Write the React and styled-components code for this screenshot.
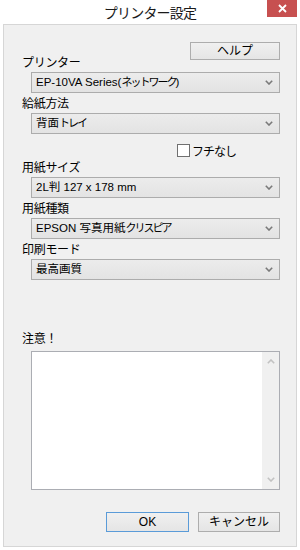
import React from "react";
import styled, { createGlobalStyle } from "styled-components";

const Global = createGlobalStyle`
  html, body { margin: 0; padding: 0; background: #ffffff; }
  body {
    font-family: "Noto Sans CJK JP", "Noto Sans", sans-serif;
    font-size: 12px;
    color: #000;
  }
  * { box-sizing: border-box; }
`;

const Window = styled.div`
  width: 300px;
  height: 550px;
  background: #ffffff;
  display: flex;
  flex-direction: column;
`;

const TitleBar = styled.div`
  height: 24px;
  display: grid;
  grid-template-columns: 1fr auto 1fr;
  align-items: start;
`;

const Title = styled.div`
  grid-column: 2;
  font-size: 14px;
  line-height: 24px;
  letter-spacing: -0.8px;
  color: #1a1a1a;
`;

const CloseButton = styled.div`
  grid-column: 3;
  justify-self: end;
  margin-right: 3px;
  width: 30px;
  height: 17px;
  background: #c75050;
  display: flex;
  align-items: center;
  justify-content: center;
`;

const Panel = styled.div`
  margin: 0 3px;
  height: 523px;
  border: 1px solid #d6d6d6;
  background: #f0f0f0;
  padding: 17px 16px 14px 18px;
  display: flex;
  flex-direction: column;
`;

const HelpRow = styled.div`
  display: flex;
  justify-content: flex-end;
  margin-bottom: -8px;
`;

const Button = styled.div`
  width: ${(p) => p.$w || 82}px;
  height: ${(p) => p.$h || 20}px;
  border: 1px solid ${(p) => (p.$primary ? "#5a9bd8" : "#adadad")};
  background: linear-gradient(#f0f0f0, #e5e5e5);
  display: flex;
  align-items: center;
  justify-content: center;
  font-family: "Liberation Sans", "Noto Sans CJK JP", sans-serif;
  font-size: 12px;
  line-height: 1;
  color: #000;
`;

const FieldLabel = styled.div`
  height: 20px;
  line-height: 20px;
  font-size: 12px;
  letter-spacing: -0.3px;
`;

const ComboBox = styled.div`
  margin-left: 9px;
  height: 21px;
  border: 1px solid #acacac;
  background: linear-gradient(#ececec, #e3e3e3);
  display: flex;
  align-items: center;
  padding: 0 6px 0 4px;
`;

const ComboText = styled.div`
  flex: 1;
  font-family: "Liberation Sans", "Noto Sans CJK JP", sans-serif;
  font-size: 11.5px;
  line-height: 1;
  white-space: nowrap;
`;

const Kana = styled.span`
  font-size: ${(p) => p.$size || 11}px;
  letter-spacing: ${(p) => p.$track || -2}px;
`;

const CheckRow = styled.div`
  height: 23px;
  display: flex;
  align-items: flex-end;
  padding-left: 155px;
  gap: 2px;
`;

const CheckBox = styled.div`
  width: 13px;
  height: 13px;
  border: 1px solid #707070;
  background: #ffffff;
`;

const CheckLabel = styled.div`
  font-size: 12px;
  line-height: 13px;
`;

const NotesSection = styled.div`
  margin-top: auto;
  display: flex;
  flex-direction: column;
`;

const NotesLabel = styled(FieldLabel)`
  margin-bottom: 3px;
`;

const NotesBox = styled.div`
  margin-left: 9px;
  height: 139px;
  border: 1px solid #abadb3;
  background: #ffffff;
  display: flex;
  justify-content: flex-end;
`;

const ScrollBar = styled.div`
  width: 17px;
  background: #f0f0f0;
  display: flex;
  flex-direction: column;
  justify-content: space-between;
  align-items: center;
  padding: 7px 0 7px;
`;

const Footer = styled.div`
  margin-top: 22px;
  display: flex;
  justify-content: flex-end;
  gap: 9px;
`;

const KANA = /([\u3040-\u30FF]+)/;

const narrowKana = (text, size, track) =>
  text.split(KANA).map((part, i) =>
    i % 2 === 1 ? (
      <Kana key={i} $size={size} $track={track}>
        {part}
      </Kana>
    ) : (
      part
    )
  );

const Chevron = ({ up, color = "#7a7a7a" }) => (
  <svg width="8" height="5" viewBox="0 0 8 5">
    <polyline
      points={up ? "0.8,4.2 4,1 7.2,4.2" : "0.8,0.8 4,4 7.2,0.8"}
      fill="none"
      stroke={color}
      strokeWidth="1.6"
    />
  </svg>
);

const Combo = ({ children }) => (
  <ComboBox>
    <ComboText>{narrowKana(children)}</ComboText>
    <Chevron />
  </ComboBox>
);

export default function App() {
  return (
    <>
      <Global />
      <Window>
        <TitleBar>
          <Title>プリンター設定</Title>
          <CloseButton>
            <svg width="9" height="9" viewBox="0 0 9 9">
              <path d="M1 1 L8 8 M8 1 L1 8" stroke="#fff" strokeWidth="1.8" />
            </svg>
          </CloseButton>
        </TitleBar>
        <Panel>
          <HelpRow>
            <Button $w={90} $h={18}>ヘルプ</Button>
          </HelpRow>
          <FieldLabel>プリンター</FieldLabel>
          <Combo>EP-10VA Series(ネットワーク)</Combo>
          <FieldLabel>給紙方法</FieldLabel>
          <Combo>背面トレイ</Combo>
          <CheckRow>
            <CheckBox />
            <CheckLabel>{narrowKana("フチなし", 12, -1)}</CheckLabel>
          </CheckRow>
          <FieldLabel>用紙サイズ</FieldLabel>
          <Combo>2L判 127 x 178 mm</Combo>
          <FieldLabel>用紙種類</FieldLabel>
          <Combo>EPSON 写真用紙クリスピア</Combo>
          <FieldLabel>印刷モード</FieldLabel>
          <Combo>最高画質</Combo>
          <NotesSection>
            <NotesLabel>注意！</NotesLabel>
            <NotesBox>
              <ScrollBar>
                <Chevron up color="#c2c2c2" />
                <Chevron color="#c2c2c2" />
              </ScrollBar>
            </NotesBox>
          </NotesSection>
          <Footer>
            <Button $primary $w={83}>OK</Button>
            <Button $w={82}>キャンセル</Button>
          </Footer>
        </Panel>
      </Window>
    </>
  );
}
